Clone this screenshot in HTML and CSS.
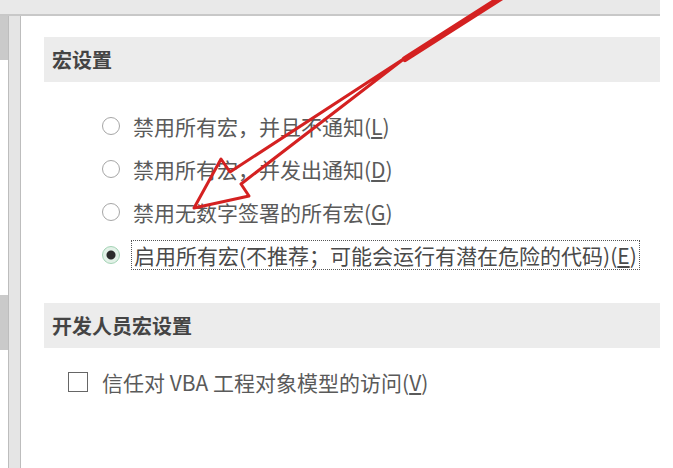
FILE: index.html
```html
<!DOCTYPE html>
<html>
<head>
    <title>信任中心 - 宏设置</title>
    <link rel="stylesheet" href="styles.css">
</head>
<body>
    <div class="window">
        <div class="topbar"></div>
        <div class="body">
            <!-- 左侧导航 -->
            <div class="nav">
                <div class="nav-item sel"></div>
                <div class="nav-gap"></div>
                <div class="nav-item sel second"></div>
            </div>
            <div class="rail"></div>

            <!-- 设置面板 -->
            <div class="panel">
                <div class="section-title">宏设置</div>
                <div class="options">
                    <label class="option">
                        <span class="radio"></span>
                        <span class="text">禁用所有宏，并且不通知(<u>L</u>)</span>
                    </label>
                    <label class="option">
                        <span class="radio"></span>
                        <span class="text">禁用所有宏，并发出通知(<u>D</u>)</span>
                    </label>
                    <label class="option">
                        <span class="radio"></span>
                        <span class="text">禁用无数字签署的所有宏(<u>G</u>)</span>
                    </label>
                    <label class="option">
                        <span class="radio checked"></span>
                        <span class="text focus">启用所有宏(不推荐；可能会运行有潜在危险的代码)(<u>E</u>)</span>
                    </label>
                </div>

                <div class="section-title dev">开发人员宏设置</div>
                <label class="check-row">
                    <span class="checkbox"></span>
                    <span class="text">信任对 VBA 工程对象模型的访问(<u>V</u>)</span>
                </label>
            </div>
        </div>
    </div>

    <!-- 标注箭头 -->
    <svg class="arrow" width="673" height="468" viewBox="0 0 673 468">
        <polygon points="194,208 221,159 230,172 405,58 241,184 249,196"
                 fill="none" stroke="#d42121" stroke-width="3" stroke-linejoin="round"/>
        <line x1="405" y1="59" x2="510" y2="-8" stroke="#d42121" stroke-width="6" stroke-linecap="round"/>
    </svg>
</body>
</html>
```

FILE: styles.css
```css
body {
    margin: 0;
    background: #fff;
    font-family: "Noto Sans CJK SC", "Liberation Sans", sans-serif;
}
.window {
    width: 660px;
    height: 468px;
    display: flex;
    flex-direction: column;
}
.topbar {
    height: 14px;
    background: #e9e9e9;
    border-bottom: 2px solid #c8c8c8;
}
.body {
    flex: 1;
    display: flex;
}
.nav {
    width: 8px;
    display: flex;
    flex-direction: column;
}
.nav-item {
    height: 44px;
    background: #cacaca;
}
.nav-gap {
    height: 235px;
}
.nav-item.second {
    height: 55px;
}
.rail {
    width: 11px;
    background: #e5e5e5;
    border-left: 1px solid #bdbdbd;
    border-right: 1px solid #bdbdbd;
}
.panel {
    flex: 1;
    padding-left: 23px;
    padding-top: 21px;
}
.section-title {
    height: 45px;
    line-height: 45px;
    padding-left: 8px;
    background: #ececec;
    color: #444;
    font-size: 20px;
    font-weight: 700;
}
.options {
    padding: 22px 0 0 58px;
}
.option {
    height: 43px;
    display: flex;
    align-items: center;
    gap: 13px;
}
.text {
    font-size: 21px;
    color: #5a5a5a;
    white-space: nowrap;
}
.radio {
    box-sizing: border-box;
    width: 18px;
    height: 18px;
    border: 1.5px solid #a6a6a6;
    border-radius: 50%;
    flex-shrink: 0;
}
.radio.checked {
    border-color: #a3d3b5;
    background: radial-gradient(circle, #2b2b2b 0 4px, #e2f1e7 5px);
}
.text.focus {
    margin-left: -2px;
    padding: 0 2px;
    border: 1px dotted #555;
    line-height: 28px;
    color: #4a4a4a;
}
.section-title.dev {
    margin-top: 27px;
}
.check-row {
    margin: 19px 0 0 24px;
    height: 30px;
    display: flex;
    align-items: center;
    gap: 14px;
}
.checkbox {
    box-sizing: border-box;
    width: 20px;
    height: 20px;
    border: 1.5px solid #666;
    flex-shrink: 0;
}
.arrow {
    position: absolute;
    left: 0;
    top: 0;
    pointer-events: none;
}
```
